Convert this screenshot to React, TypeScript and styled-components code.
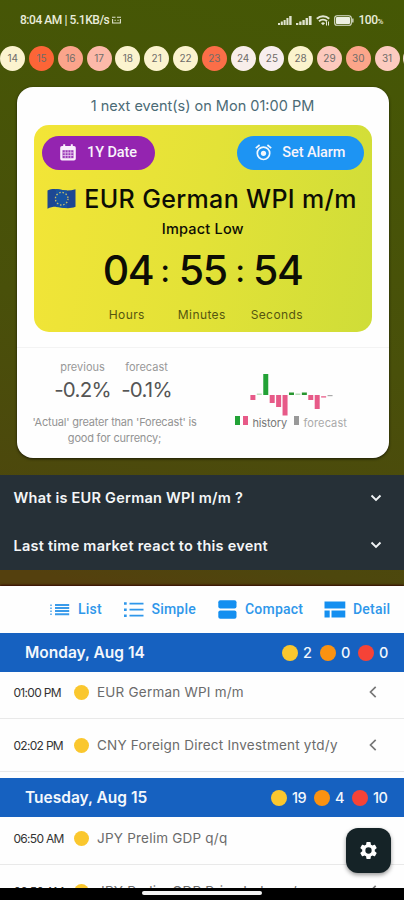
import React from 'react';
import styled, { createGlobalStyle } from 'styled-components';

const GlobalStyle = createGlobalStyle`
  * { box-sizing: border-box; }
  body { margin: 0; background: #4c490c; }
`;

const Screen = styled.div`
  position: relative;
  width: 404px;
  height: 900px;
  overflow: hidden;
  display: flex;
  flex-direction: column;
  font-family: Inter, 'Open Sans', sans-serif;
  white-space: nowrap;
  background: linear-gradient(192deg, #455805 0%, #49500a 38%, #4d470d 60%, #54400e 66%);
`;

const StatusBar = styled.header`
  height: 40px;
  flex: none;
  display: flex;
  align-items: center;
  justify-content: space-between;
  padding: 0 21px 0 20px;
  color: #e9ecd9;
  font: 500 12px/14px Roboto, sans-serif;
`;

const StatusGroup = styled.div<{ $gap: number }>`
  display: flex;
  align-items: center;
  gap: ${(p) => p.$gap}px;
  letter-spacing: -0.45px;
`;

const Percent = styled.span`
  font-size: 8px;
  margin-left: -4px;
  padding-top: 3px;
`;

const Dates = styled.nav`
  flex: none;
  display: flex;
  gap: 3.8px;
  height: 25px;
  margin: 5.5px 0 16px -28.6px;
`;

const DateDot = styled.span<{ $color: string }>`
  flex: none;
  width: 25px;
  height: 25px;
  border-radius: 50%;
  background: ${(p) => p.$color};
  color: #6f6c69;
  font-size: 10px;
  line-height: 25px;
  text-align: center;
`;

const Card = styled.section`
  flex: none;
  width: 372px;
  height: 371.5px;
  margin-left: 16.5px;
  border-radius: 16px;
  background: #fefefe;
  box-shadow: 0 1px 3px rgba(0, 0, 0, 0.65);
`;

const CardTitle = styled.div`
  height: 38.5px;
  line-height: 38px;
  text-align: center;
  font-size: 14.5px;
  color: #4b6b76;
`;

const Hero = styled.div`
  width: 338px;
  height: 207px;
  margin-left: 17.3px;
  padding-top: 11px;
  border-radius: 15px;
  background: linear-gradient(100deg, #f3e537 0%, #e3e237 50%, #cfdd38 100%);
  color: #0d0d05;
`;

const HeroActions = styled.div`
  display: flex;
  justify-content: space-between;
  padding: 0 8px;
`;

const Pill = styled.button<{ $color: string; $width: number; $gap: number }>`
  width: ${(p) => p.$width}px;
  height: 33.5px;
  display: flex;
  align-items: center;
  justify-content: center;
  gap: ${(p) => p.$gap}px;
  border: 0;
  padding: 0;
  border-radius: 17px;
  background: ${(p) => p.$color};
  color: #f8f4fb;
  font: 500 14.5px/18px Roboto, sans-serif;
  letter-spacing: -0.1px;
`;

const EventName = styled.h1`
  display: flex;
  align-items: center;
  gap: 8px;
  height: 34px;
  margin: 12px 0 0 13.5px;
  font-size: 25px;
  font-weight: 500;
  line-height: 34px;
  letter-spacing: 0.35px;
`;

const Impact = styled.div`
  height: 20px;
  margin-top: 3px;
  line-height: 20px;
  text-align: center;
  font-size: 14.5px;
  font-weight: 500;
  letter-spacing: 0.2px;
`;

const Countdown = styled.div`
  display: grid;
  grid-template-columns: 50px 25px 50px 25px 50px;
  justify-content: center;
  height: 50px;
  margin-top: 6px;
  line-height: 50px;
  text-align: center;
  font-size: 41px;
  font-weight: 500;
  letter-spacing: -1.4px;
`;

const Colon = styled.span`
  font-size: 31px;
  line-height: 51px;
  letter-spacing: 0;
`;

const Units = styled.div`
  display: grid;
  grid-template-columns: 75px 75px 75px;
  justify-content: center;
  height: 20px;
  margin: 10px 2px 0 0;
  line-height: 20px;
  text-align: center;
  font-size: 12px;
  letter-spacing: 0.4px;
  color: #56560f;
`;

const Stats = styled.div`
  display: flex;
  margin-top: 14.5px;
  padding: 9.5px 0 0 6px;
  border-top: 1px solid #f3f3f3;
`;

const StatsText = styled.div`
  width: 184px;
  display: flex;
  flex-direction: column;
  align-items: center;
`;

const Values = styled.div`
  display: flex;
  gap: 2px;
`;

const Value = styled.div`
  width: 62px;
  text-align: center;
  font-size: 20.5px;
  line-height: 26px;
  letter-spacing: -0.75px;
  color: #555;
`;

const ValueLabel = styled.div`
  font-size: 11px;
  line-height: 20px;
  letter-spacing: 0;
  color: #999;
`;

const Hint = styled.p`
  margin: 10.5px 0 0;
  text-align: center;
  font-size: 11px;
  line-height: 16px;
  letter-spacing: -0.2px;
  color: #939393;
`;

const ChartPane = styled.div`
  display: flex;
  flex-direction: column;
  padding: 15.5px 0 0 28px;
`;

const Legend = styled.div`
  display: flex;
  align-items: center;
  height: 14px;
  font-size: 11px;
`;

const Swatch = styled.i<{ $color: string; $after: number }>`
  width: 5px;
  height: 9px;
  margin: 0 ${(p) => p.$after}px 4px 0;
  background: ${(p) => p.$color};
`;

const LegendText = styled.span<{ $faint?: boolean }>`
  margin-right: ${(p) => (p.$faint ? 0 : 6.5)}px;
  color: ${(p) => (p.$faint ? '#aaa' : '#777')};
  letter-spacing: ${(p) => (p.$faint ? 0.1 : -0.15)}px;
`;

const Accordion = styled.section`
  flex: none;
  height: 95px;
  margin-top: 16.5px;
  background: #263037;
`;

const AccordionRow = styled.div`
  display: flex;
  align-items: center;
  justify-content: space-between;
  height: 47.5px;
  padding: 0 22.5px 1px 13.5px;
  color: #f4f6f7;
  font-size: 14.5px;
  font-weight: 600;
  letter-spacing: 0.24px;
`;

const Schedule = styled.main`
  flex: none;
  height: 330px;
  margin-top: 16.5px;
  background: #fefefe;
  box-shadow: 0 -1px 2px rgba(50, 0, 0, 0.9);
`;

const Tabs = styled.div`
  display: flex;
  align-items: center;
  height: 47px;
  padding: 0 0 1px 50px;
`;

const Tab = styled.div<{ $width: number; $icon: number }>`
  flex: none;
  width: ${(p) => p.$width}px;
  display: grid;
  grid-template-columns: ${(p) => p.$icon}px auto;
  align-items: center;
  color: #2f97ea;
  font: 500 14px/18px Roboto, sans-serif;
  letter-spacing: 0.2px;
`;

const DayHeader = styled.div<{ $top?: number }>`
  display: flex;
  align-items: center;
  justify-content: space-between;
  height: 39px;
  margin-top: ${(p) => p.$top ?? 0}px;
  padding: 0 16px 0 25px;
  background: #1661c0;
  color: #f3f7fc;
  font-size: 15.5px;
  font-weight: 600;
  line-height: 39px;
`;

const Counts = styled.div`
  display: flex;
  align-items: center;
  font-size: 14.5px;
  font-weight: 500;
  letter-spacing: -0.4px;
`;

const Dot = styled.i<{ $color: string; $size: number }>`
  flex: none;
  width: ${(p) => p.$size}px;
  height: ${(p) => p.$size}px;
  border-radius: 50%;
  background: ${(p) => p.$color};
`;

const Count = styled.span<{ $after: number; $width: number }>`
  width: ${(p) => p.$width}px;
  margin: 0 ${(p) => p.$after}px 0 5px;
`;

const EventRow = styled.div<{ $height: number; $below: number }>`
  display: grid;
  grid-template-columns: 60.5px 23px 1fr 9px;
  align-items: center;
  height: ${(p) => p.$height}px;
  padding: 0 26px ${(p) => p.$below}px 13.5px;
  border-bottom: 1px solid #e9e9e9;
`;

const Time = styled.span`
  font-size: 12px;
  letter-spacing: -0.7px;
  color: #333;
`;

const Name = styled.span`
  font-size: 13.5px;
  letter-spacing: 0.22px;
  color: #6b6b6b;
`;

const Fab = styled.button`
  position: absolute;
  left: 346px;
  top: 828px;
  width: 45px;
  height: 45px;
  display: grid;
  place-items: center;
  padding: 0;
  border: 0;
  border-radius: 12px;
  background: #152327;
  box-shadow: 0 2px 4px rgba(0, 0, 0, 0.4);
`;

const SystemBar = styled.footer`
  position: absolute;
  left: 0;
  right: 0;
  bottom: 0;
  height: 12px;
  display: flex;
  justify-content: center;
  padding-top: 3px;
  background: #000;
`;

const HomeHandle = styled.span`
  width: 120px;
  height: 4px;
  border-radius: 2px;
  background: #f2f2f2;
`;

const dates: [string, string][] = [
  ['', '#fbf1cd'], ['14', '#fbf3cf'], ['15', '#fc6537'], ['16', '#fba48b'], ['17', '#fcb9a9'],
  ['18', '#fbf3cf'], ['21', '#fbf3cf'], ['22', '#fbf3cf'], ['23', '#fb6e48'], ['24', '#f8eeea'],
  ['25', '#f8eeee'], ['28', '#fbf3cc'], ['29', '#fcc9bd'], ['30', '#fca58a'], ['31', '#fccbc0'],
  ['', '#fbe0d0'],
];

const YELLOW = '#fac72e';
const ORANGE = '#fb9211';
const RED = '#f54337';

const Signal = ({ w }: { w: number }) => (
  <svg width={w} height="10" viewBox="0 0 15 10" preserveAspectRatio="none" fill="#dfe3cf">
    <path d="M0 8h2.200v2H0zM3 6.500h2.200V10H3zM6 5h2.200v5H6zM9 3h2.200v7H9zM12 1h2.600v9H12z" />
  </svg>
);

const Wifi = () => (
  <svg width="14" height="11" viewBox="0 0 14 11" fill="none" stroke="#e2e6d4" strokeWidth="2">
    <path d="M.8 3.7a9 9 0 0 1 12.4 0M3 6.200a6 6 0 0 1 8 0" />
    <path d="M5 8.2a3 3 0 0 1 4 0L7 10.3z" fill="#e2e6d4" stroke="none" />
    <path d="M10.5 6.5v4M12.5 6.5v4" strokeWidth="1" />
  </svg>
);

const Battery = () => (
  <svg width="20" height="11" viewBox="0 0 20 11">
    <rect x=".7" y=".7" width="16.6" height="9.6" rx="2.4" fill="none" stroke="#dfe3d3" strokeWidth="1.1" />
    <rect x="2" y="2" width="14" height="7" rx="1" fill="#edf0e2" />
    <path d="M18.2 3.5h1.3v4h-1.3z" fill="#dfe3d3" />
  </svg>
);

const Notice = () => (
  <svg width="9" height="8" viewBox="0 0 9 8" fill="none" stroke="#dfe3cf" strokeWidth="1.1">
    <path d="M0 1.200h3.500M5 1.200h4M.6 3v4h7.800V3M2.500 4.200h1.300M5.400 4.200h1.300" />
  </svg>
);

const Calendar = () => (
  <svg width="16" height="17" viewBox="0 0 16 17">
    <path d="M2 2h1.2V.3h2V2h5.6V.3h2V2H14a1.8 1.8 0 0 1 1.8 1.8v11A1.8 1.8 0 0 1 14 16.6H2A1.8 1.8 0 0 1 .2 14.8v-11A1.8 1.8 0 0 1 2 2z" fill="#f9effc" />
    <path d="M2.5 6.2h11v8h-11z" fill="#9c3bb8" />
    <path d="M2.5 8.8h11M2.5 11.5h11M5.2 6.2v8M8 6.2v8M10.8 6.2v8" stroke="#e8cdf0" strokeWidth=".8" />
  </svg>
);

const Alarm = () => (
  <svg width="17" height="17" viewBox="0 0 17 17" fill="none" stroke="#f1f8fe" strokeWidth="1.7">
    <circle cx="8.5" cy="9.3" r="6.2" />
    <circle cx="8.5" cy="9.3" r="2.6" fill="#f1f8fe" stroke="none" />
    <path d="M.8 4.2 4.6 1M16.2 4.2 12.4 1" />
  </svg>
);

const Flag = () => (
  <svg width="29" height="22" viewBox="0 0 29 22">
    <path d="M.5 2.5C5 .2 9.5.8 14 1.800s9.500 1 14.500-.6v17.600c-5 2-9.500 1.600-14 .7S5 18.300.5 20.800z" fill="#1c4793" />
    <path d="M9 1c1.700.1 3.300.4 5 .8 2 .4 4 .7 6 .6v17.700c-2 0-4-.2-6-.6-1.700-.3-3.300-.6-5-.6z" fill="#17539f" />
    <circle cx="14.7" cy="10.7" r="6.3" fill="none" stroke="#c5bd68" strokeWidth="1.3" strokeDasharray="1.5 1.8" />
  </svg>
);

const bars: [number, number, string][] = [
  [0, 5, '#e75a88'], [-1.5, 1.5, '#b9dfbb'], [-21, 21, '#22a236'], [0, 8, '#e75a88'], [0, 12, '#e75a88'],
  [0, 20.5, '#e75a88'], [-2.5, 2.5, '#27962f'], [-1.5, 1.5, '#b9dfbb'], [-2.5, 2.5, '#27962f'],
  [0, 5, '#e75a88'], [0, 14, '#e75a88'], [1, 1.7, '#ee83a5'], [0, 1.2, '#aaa'],
];

const HistoryChart = () => (
  <svg width="100" height="43" viewBox="0 0 100 43">
    {bars.map(([y, h, color], i) => (
      <rect key={i} x={15.4 + i * 6.43} y={22 + y} width="5" height={h} fill={color} />
    ))}
  </svg>
);

const Chevron = ({ left }: { left?: boolean }) =>
  left ? (
    <svg width="8" height="12" viewBox="0 0 8 12" fill="none" stroke="#777" strokeWidth="1.7">
      <path d="M6.700 .8 1.500 6l5.200 5.200" />
    </svg>
  ) : (
    <svg width="12" height="8" viewBox="0 0 12 8" fill="none" stroke="#f0f3f5" strokeWidth="1.9">
      <path d="M1.500 1.500 6 6l4.500-4.500" />
    </svg>
  );

const ListIcon = () => (
  <svg width="20" height="13" viewBox="0 0 20 13" fill="#3a9bea">
    <path d="M5 1h14.2v2H5zM5 4h14.2v2H5zM5 7h14.2v2H5zM5 10.300h14.2v2H5z" />
    <path d="M0 1.500h2v1.400H0zM0 4.500h2v1.400H0zM0 7.500h2v1.400H0zM0 10.500h2v1.400H0z" opacity=".7" />
  </svg>
);

const SimpleIcon = () => (
  <svg width="20" height="17" viewBox="0 0 20 17" fill="#2f97ea">
    <path d="M5.500 1.800h14v1.700h-14zM5.500 7.800h14v1.700h-14zM5.500 13.800h14v1.700h-14z" />
    <path d="M0 1.300h2.700v2.500H0zM0 7.400h2.700v2.500H0zM0 13.400h2.700v2.500H0z" />
  </svg>
);

const CompactIcon = () => (
  <svg width="19" height="19" viewBox="0 0 19 19" fill="#148ff0">
    <rect x=".3" y=".3" width="18.2" height="8.2" rx="2" />
    <rect x=".3" y="10.5" width="18.2" height="8.2" rx="2" />
  </svg>
);

const DetailIcon = () => (
  <svg width="22" height="17" viewBox="0 0 22 17" fill="#148ff0">
    <path d="M.5 .5h20.800v7H.5zM.5 9.500h5.200v7H.5zM7.500 9.500h13.800v7H7.500z" />
  </svg>
);

const Gear = () => (
  <svg width="21" height="21" viewBox="0 0 24 24" fill="#fff">
    <path d="M19.14 12.94c.04-.3.06-.61.06-.94 0-.32-.02-.64-.07-.94l2.03-1.58a.49.49 0 0 0 .12-.61l-1.92-3.32a.49.49 0 0 0-.59-.22l-2.39.96a7 7 0 0 0-1.62-.94l-.36-2.54a.48.48 0 0 0-.48-.41h-3.84a.47.47 0 0 0-.47.41l-.36 2.54c-.59.24-1.13.57-1.62.94l-2.39-.96a.48.48 0 0 0-.59.22L2.74 8.87a.48.48 0 0 0 .12.61l2.03 1.58c-.05.3-.09.63-.09.94s.02.64.07.94l-2.03 1.58a.49.49 0 0 0-.12.61l1.92 3.32c.12.22.37.29.59.22l2.39-.96c.5.38 1.03.7 1.62.94l.36 2.54c.05.24.24.41.48.41h3.84c.24 0 .44-.17.47-.41l.36-2.54a7 7 0 0 0 1.62-.94l2.39.96c.22.08.47 0 .59-.22l1.92-3.32a.47.47 0 0 0-.12-.61zM12 15.6a3.6 3.6 0 1 1 0-7.2 3.6 3.6 0 0 1 0 7.2z" />
  </svg>
);

function DayCounts({ values, widths, afters }: { values: string[]; widths: number[]; afters: number[] }) {
  return (
    <Counts>
      {[YELLOW, ORANGE, RED].map((color, i) => (
        <React.Fragment key={color}>
          <Dot $color={color} $size={16} />
          <Count $width={widths[i]} $after={afters[i]}>{values[i]}</Count>
        </React.Fragment>
      ))}
    </Counts>
  );
}

function Event({ time, name, height, below }: { time: string; name: string; height: number; below: number }) {
  return (
    <EventRow $height={height} $below={below}>
      <Time>{time}</Time>
      <Dot $color={YELLOW} $size={15} />
      <Name>{name}</Name>
      <Chevron left />
    </EventRow>
  );
}

export default function App() {
  return (
    <Screen>
      <GlobalStyle />
      <StatusBar>
        <StatusGroup $gap={3}>
          8:04 AM | 5.1KB/s <Notice />
        </StatusGroup>
        <StatusGroup $gap={4}>
          <Signal w={14} />
          <Signal w={16} />
          <Wifi />
          <Battery />
          <span>100</span>
          <Percent>%</Percent>
        </StatusGroup>
      </StatusBar>

      <Dates>
        {dates.map(([day, color], i) => (
          <DateDot key={i} $color={color}>{day}</DateDot>
        ))}
      </Dates>

      <Card>
        <CardTitle>1 next event(s) on Mon 01:00 PM</CardTitle>
        <Hero>
          <HeroActions>
            <Pill $color="#9424b0" $width={113.5} $gap={11}><Calendar />1Y Date</Pill>
            <Pill $color="#1d94f3" $width={127} $gap={10}><Alarm />Set Alarm</Pill>
          </HeroActions>
          <EventName><Flag />EUR German WPI m/m</EventName>
          <Impact>Impact Low</Impact>
          <Countdown>
            <span>04</span><Colon>:</Colon><span>55</span><Colon>:</Colon><span>54</span>
          </Countdown>
          <Units><span>Hours</span><span>Minutes</span><span>Seconds</span></Units>
        </Hero>
        <Stats>
          <StatsText>
            <Values>
              <Value><ValueLabel>previous</ValueLabel>-0.2%</Value>
              <Value><ValueLabel>forecast</ValueLabel>-0.1%</Value>
            </Values>
            <Hint>'Actual' greater than 'Forecast' is<br />good for currency;</Hint>
          </StatsText>
          <ChartPane>
            <HistoryChart />
            <Legend>
              <Swatch $color="#22a236" $after={3} />
              <Swatch $color="#e75a88" $after={5} />
              <LegendText>history</LegendText>
              <Swatch $color="#999" $after={5} />
              <LegendText $faint>forecast</LegendText>
            </Legend>
          </ChartPane>
        </Stats>
      </Card>

      <Accordion>
        <AccordionRow>What is EUR German WPI m/m ?<Chevron /></AccordionRow>
        <AccordionRow>Last time market react to this event<Chevron /></AccordionRow>
      </Accordion>

      <Schedule>
        <Tabs>
          <Tab $width={73.5} $icon={28}><ListIcon />List</Tab>
          <Tab $width={94} $icon={28}><SimpleIcon />Simple</Tab>
          <Tab $width={106.5} $icon={27.5}><CompactIcon />Compact</Tab>
          <Tab $width={70} $icon={29}><DetailIcon />Detail</Tab>
        </Tabs>
        <DayHeader>
          Monday, Aug 14
          <DayCounts values={['2', '0', '0']} widths={[9, 9, 9]} afters={[8, 8, 0]} />
        </DayHeader>
        <Event time="01:00 PM" name="EUR German WPI m/m" height={47} below={6} />
        <Event time="02:02 PM" name="CNY Foreign Direct Investment ytd/y" height={53} below={0} />
        <DayHeader $top={6}>
          Tuesday, Aug 15
          <DayCounts values={['19', '4', '10']} widths={[15, 9, 15]} afters={[7, 8, 0]} />
        </DayHeader>
        <Event time="06:50 AM" name="JPY Prelim GDP q/q" height={48} below={5} />
        <Event time="06:50 AM" name="JPY Prelim GDP Price Index q/q" height={53} below={0} />
      </Schedule>

      <Fab aria-label="Settings"><Gear /></Fab>
      <SystemBar><HomeHandle /></SystemBar>
    </Screen>
  );
}
